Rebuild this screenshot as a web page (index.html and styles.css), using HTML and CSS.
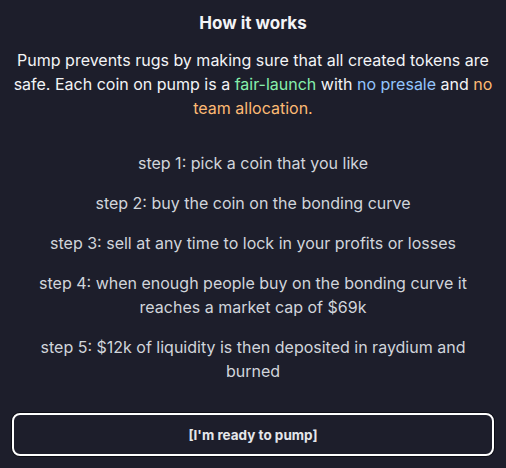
FILE: index.html
```html
<!DOCTYPE html>
<html>
<head>
<meta charset="utf-8">
<link rel="stylesheet" href="styles.css">
</head>
<body>
<div class="modal">
  <h2 class="title">How it works</h2>
  <p class="intro">Pump prevents rugs by making sure that all created tokens are safe. Each coin on pump is a <span class="green">fair-launch</span> with <span class="blue">no presale</span> and <span class="orange">no team allocation.</span></p>
  <div class="steps">
    <p>step 1: pick a coin that you like</p>
    <p>step 2: buy the coin on the bonding curve</p>
    <p>step 3: sell at any time to lock in your profits or losses</p>
    <p>step 4: when enough people buy on the bonding curve it reaches a market cap of $69k</p>
    <p>step 5: $12k of liquidity is then deposited in raydium and burned</p>
  </div>
  <button class="cta">[I'm ready to pump]</button>
</div>
</body>
</html>
```
FILE: styles.css
```css
* { box-sizing: border-box; }
html, body { margin: 0; height: 100%; }
body {
  background: #1d1e2b;
  font-family: Inter, "Noto Sans", sans-serif;
  color: #f3f4f6;
}
.modal {
  padding: 11px 12px 12px;
  display: flex;
  flex-direction: column;
  align-items: stretch;
  text-align: center;
}
.title {
  margin: 0;
  font-size: 17px;
  line-height: 24px;
  font-weight: 700;
  color: #f3f4f6;
}
.intro {
  margin: 13px 0 0;
  font-size: 16px;
  line-height: 24px;
  color: #f3f4f6;
}
.green { color: #86efac; }
.blue { color: #93c5fd; }
.orange { color: #fdba74; }
.steps {
  margin-top: 31px;
  display: flex;
  flex-direction: column;
  gap: 16px;
}
.steps p {
  margin: 0;
  font-size: 16px;
  line-height: 24px;
  color: #d1d5db;
}
.cta {
  margin-top: 30px;
  height: 43px;
  background: #1d1e2b;
  border: 2px solid #ffffff;
  border-radius: 8px;
  box-shadow: 0 0 0 1px #0b0c14;
  color: #e5e7eb;
  font-family: Inter, "Noto Sans", sans-serif;
  font-weight: 700;
  font-size: 13.5px;
}
```
